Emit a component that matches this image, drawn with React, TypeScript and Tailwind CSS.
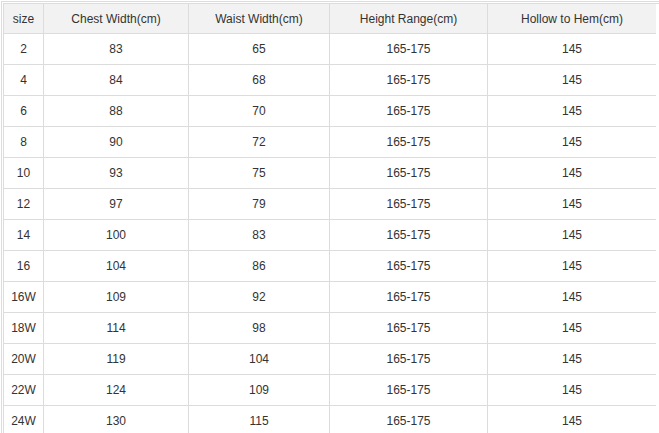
import React from "react";

const header = ["size", "Chest Width(cm)", "Waist Width(cm)", "Height Range(cm)", "Hollow to Hem(cm)"];
const rows: string[][] = [
  ["2", "83", "65"],
  ["4", "84", "68"],
  ["6", "88", "70"],
  ["8", "90", "72"],
  ["10", "93", "75"],
  ["12", "97", "79"],
  ["14", "100", "83"],
  ["16", "104", "86"],
  ["16W", "109", "92"],
  ["18W", "114", "98"],
  ["20W", "119", "104"],
  ["22W", "124", "109"],
  ["24W", "130", "115"],
];

export default function App() {
  return (
    <div
      className="w-[659px] h-[433px] overflow-hidden bg-white text-[12px] text-[#333]"
      style={{ fontFamily: '"Liberation Sans", Arial, sans-serif' }}
    >
      <div className="pt-[1px] pl-[1px]">
        <div className="border-l border-t border-[#dcdcdc] pl-[1px] pt-[1px]">
          <div className="grid grid-cols-[40px_145px_141px_158px_168px] border-l border-t border-[#dcdcdc]">
            {header.map((h, i) => (
              <div
                key={h}
                className={`h-[30px] flex items-center justify-center bg-[#f2f2f2] border-b border-[#dcdcdc] ${i < 4 ? "border-r" : ""}`}
              >
                {h}
              </div>
            ))}
            {rows.map((r) => {
              const cells = [r[0], r[1], r[2], "165-175", "145"];
              return cells.map((c, i) => (
                <div
                  key={r[0] + "-" + i}
                  className={`h-[31px] flex items-center justify-center border-b border-[#dcdcdc] ${i < 4 ? "border-r" : ""}`}
                >
                  {c}
                </div>
              ));
            })}
          </div>
        </div>
      </div>
    </div>
  );
}
